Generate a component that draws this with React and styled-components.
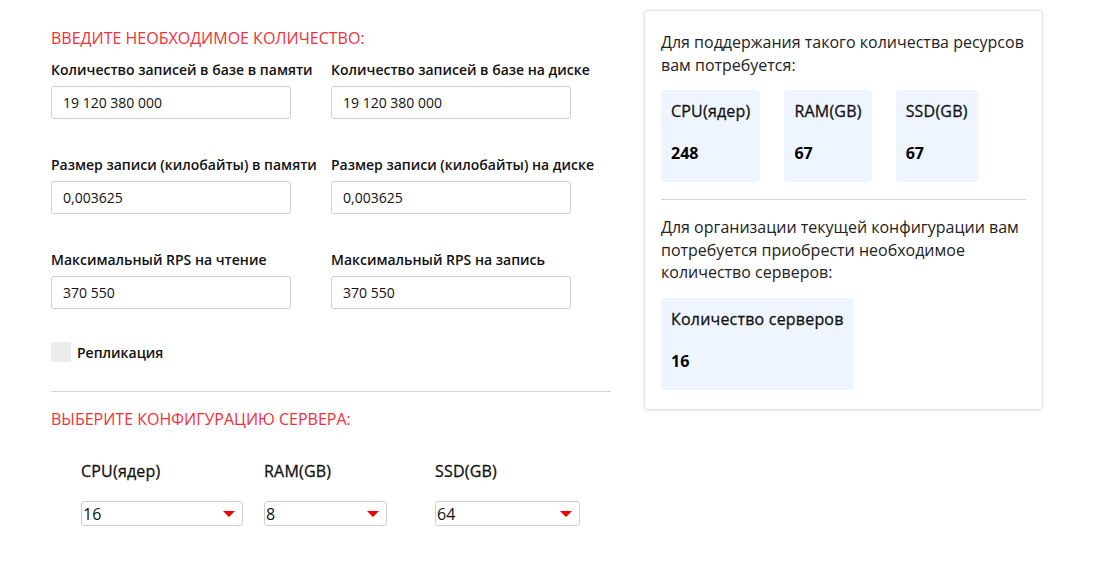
import React from "react";
import styled, { createGlobalStyle, css } from "styled-components";

const Global = createGlobalStyle`
  html, body { margin: 0; padding: 0; background: #fff; }
  body { font-family: "Open Sans", "Noto Sans", sans-serif; color: #111; }
  * { box-sizing: border-box; }
`;

const medium = css`
  font-weight: 400;
  -webkit-text-stroke: 0.3px currentColor;
  letter-spacing: 0.2px;
`;

const Page = styled.div`
  display: flex;
  align-items: flex-start;
  gap: 33px;
  padding: 10px 0 0 51px;
`;

const Left = styled.div`
  width: 560px;
  display: flex;
  flex-direction: column;
`;

const SectionTitle = styled.h2`
  margin: ${(p) => p.$mt || 0}px 0 0;
  font-size: 16px;
  line-height: 22px;
  font-weight: 400;
  color: #f0313b;
  text-transform: uppercase;
`;

const FieldGrid = styled.div`
  display: grid;
  grid-template-columns: 280px 280px;
  row-gap: 36px;
  margin-top: 11px;
`;

const Field = styled.label`
  display: flex;
  flex-direction: column;
  gap: 7px;
`;

const Label = styled.span`
  font-size: 14px;
  line-height: 19px;
  font-weight: 600;
  color: #111;
  white-space: nowrap;
`;

const TextInput = styled.input`
  width: 240px;
  height: 33px;
  border: 1px solid #cfcfcf;
  border-radius: 3px;
  padding: 0 11px;
  font-family: inherit;
  font-size: 14px;
  color: #111;
  outline: none;
`;

const CheckRow = styled.label`
  display: flex;
  align-items: center;
  gap: 6px;
  margin-top: 33px;
`;

const CheckBox = styled.span`
  width: 20px;
  height: 20px;
  background: #ebebeb;
`;

const Divider = styled.hr`
  border: 0;
  border-top: 1px solid #d2d2d2;
  margin: ${(p) => p.$m};
  width: 100%;
`;

const SelectRow = styled.div`
  display: flex;
  padding-left: 30px;
  margin-top: 30px;
`;

const SelectField = styled.div`
  display: flex;
  flex-direction: column;
  gap: 19px;
  margin-right: ${(p) => p.$mr}px;
`;

const SelectLabel = styled.span`
  font-size: 16px;
  line-height: 22px;
  color: #111;
  ${medium}
`;

const SelectWrap = styled.div`
  position: relative;
  width: ${(p) => p.$w}px;
  &::after {
    content: "";
    position: absolute;
    right: 8px;
    top: 10px;
    border-left: 6px solid transparent;
    border-right: 6px solid transparent;
    border-top: 6px solid #f00000;
    pointer-events: none;
  }
`;

const Select = styled.select`
  appearance: none;
  display: block;
  width: 100%;
  height: 25px;
  border: 1px solid #cfcfcf;
  border-radius: 3px;
  background: #fff;
  padding: 0 1px;
  font-family: inherit;
  font-size: 16px;
  color: #111;
  outline: none;
`;

const Card = styled.div`
  width: 399px;
  border: 1px solid #e3e3e3;
  border-radius: 4px;
  box-shadow: 0 1px 4px rgba(0, 0, 0, 0.08);
  padding: 20px 16px 19px;
  display: flex;
  flex-direction: column;
`;

const Text = styled.p`
  margin: 0;
  font-size: 16px;
  line-height: 22.5px;
  color: #222;
`;

const BoxRow = styled.div`
  display: flex;
  gap: 24px;
  margin-top: ${(p) => p.$mt}px;
`;

const Box = styled.div`
  background: #eef5ff;
  border-radius: 4px;
  padding: 10px 10px 18px;
  display: flex;
  flex-direction: column;
  gap: 20px;
`;

const BoxTitle = styled.span`
  font-size: 16px;
  line-height: 22px;
  color: #111;
  white-space: nowrap;
  ${medium}
`;

const BoxValue = styled.span`
  font-size: 16px;
  line-height: 22px;
  font-weight: 700;
  color: #000;
`;

const fields = [
  ["Количество записей в базе в памяти", "19 120 380 000"],
  ["Количество записей в базе на диске", "19 120 380 000"],
  ["Размер записи (килобайты) в памяти", "0,003625"],
  ["Размер записи (килобайты) на диске", "0,003625"],
  ["Максимальный RPS на чтение", "370 550"],
  ["Максимальный RPS на запись", "370 550"],
];

const selects = [
  { label: "CPU(ядер)", value: "16", w: 162, mr: 21 },
  { label: "RAM(GB)", value: "8", w: 123, mr: 48 },
  { label: "SSD(GB)", value: "64", w: 145, mr: 0 },
];

const resources = [
  ["CPU(ядер)", "248"],
  ["RAM(GB)", "67"],
  ["SSD(GB)", "67"],
];

export default function App() {
  return (
    <>
      <Global />
      <Page>
        <Left>
          <SectionTitle $mt={17}>Введите необходимое количество:</SectionTitle>
          <FieldGrid>
            {fields.map(([l, v], i) => (
              <Field key={i}>
                <Label>{l}</Label>
                <TextInput defaultValue={v} />
              </Field>
            ))}
          </FieldGrid>
          <CheckRow>
            <CheckBox />
            <Label>Репликация</Label>
          </CheckRow>
          <Divider $m="29px 0 0" />
          <SectionTitle $mt={16}>Выберите конфигурацию сервера:</SectionTitle>
          <SelectRow>
            {selects.map((s) => (
              <SelectField key={s.label} $mr={s.mr}>
                <SelectLabel>{s.label}</SelectLabel>
                <SelectWrap $w={s.w}>
                  <Select defaultValue={s.value}>
                    <option value={s.value}>{s.value}</option>
                  </Select>
                </SelectWrap>
              </SelectField>
            ))}
          </SelectRow>
        </Left>
        <Card>
          <Text>Для поддержания такого количества ресурсов вам потребуется:</Text>
          <BoxRow $mt={14}>
            {resources.map(([t, v]) => (
              <Box key={t}>
                <BoxTitle>{t}</BoxTitle>
                <BoxValue>{v}</BoxValue>
              </Box>
            ))}
          </BoxRow>
          <Divider $m="17px 0 16px" />
          <Text>
            Для организации текущей конфигурации вам потребуется приобрести
            необходимое количество серверов:
          </Text>
          <BoxRow $mt={14}>
            <Box>
              <BoxTitle>Количество серверов</BoxTitle>
              <BoxValue>16</BoxValue>
            </Box>
          </BoxRow>
        </Card>
      </Page>
    </>
  );
}
